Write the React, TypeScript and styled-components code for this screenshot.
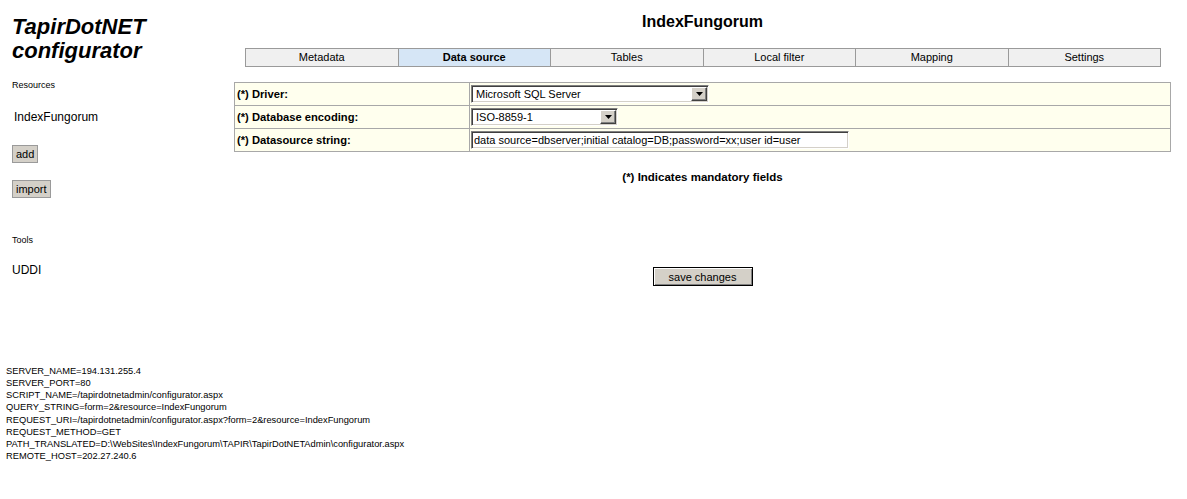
import React from "react";
import styled, { createGlobalStyle } from "styled-components";

const Global = createGlobalStyle`
  html, body { margin: 0; padding: 0; background: #fff; }
  body { font-family: "Liberation Sans", Arial, sans-serif; color: #000; }
`;

const Page = styled.div`
  width: 1187px;
`;

const Top = styled.div`
  display: flex;
  min-height: 365px;
`;

const Sidebar = styled.div`
  width: 222px;
  padding-left: 12px;
  flex-shrink: 0;
  display: flex;
  flex-direction: column;
  align-items: flex-start;
`;

const Title = styled.h1`
  margin: 15px 0 0;
  font: italic bold 22px/24px "Liberation Sans", Arial, sans-serif;
`;

const SectionLabel = styled.div<{ $mt: number }>`
  margin-top: ${(p) => p.$mt}px;
  font-size: 9px;
  line-height: 11px;
`;

const SideLink = styled.div<{ $mt: number; $indent?: number }>`
  margin-top: ${(p) => p.$mt}px;
  margin-left: ${(p) => p.$indent ?? 0}px;
  font-size: 12px;
  line-height: 14px;
`;

const SmallButton = styled.button<{ $mt: number }>`
  margin-top: ${(p) => p.$mt}px;
  height: 18px;
  padding: 0 3px;
  background: #d4d0c8;
  border: 1px solid #9a9a9a;
  font: 11px/14px "Liberation Sans", Arial, sans-serif;
  color: #000;
`;

const Main = styled.div`
  width: 937px;
  display: flex;
  flex-direction: column;
  align-items: center;
`;

const Heading = styled.h2`
  margin: 13px 0 0;
  font: bold 16px/18px "Liberation Sans", Arial, sans-serif;
  text-align: center;
`;

const Tabs = styled.div`
  margin-top: 17px;
  margin-left: 1px;
  width: 915px;
  display: grid;
  grid-template-columns: repeat(6, 1fr);
  border-left: 1px solid #9a9a9a;
  border-top: 1px solid #9a9a9a;
  border-bottom: 1px solid #9a9a9a;
`;

const Tab = styled.div<{ $active?: boolean }>`
  height: 17px;
  border-right: 1px solid #9a9a9a;
  background: ${(p) => (p.$active ? "#d6e6f6" : "#f0f0f0")};
  font-size: 11px;
  line-height: 17px;
  font-weight: ${(p) => (p.$active ? "bold" : "normal")};
  text-align: center;
`;

const FormGrid = styled.div`
  margin-top: 15px;
  width: 937px;
  box-sizing: border-box;
  display: grid;
  grid-template-columns: 235px 1fr;
  border-top: 1px solid #a8a8a8;
  border-left: 1px solid #a8a8a8;
  background: #ffffee;
`;

const LabelCell = styled.div`
  height: 22px;
  border-right: 1px solid #a8a8a8;
  border-bottom: 1px solid #a8a8a8;
  padding-left: 2px;
  display: flex;
  align-items: center;
  font-size: 11.2px;
  font-weight: bold;
`;

const ValueCell = styled.div`
  height: 22px;
  border-right: 1px solid #a8a8a8;
  border-bottom: 1px solid #a8a8a8;
  padding-left: 1px;
  display: flex;
  align-items: center;
`;

const SelectBox = styled.div<{ $w: number }>`
  width: ${(p) => p.$w}px;
  height: 18px;
  box-sizing: border-box;
  display: flex;
  background: #fff;
  border: 1px solid;
  border-color: #808080 #ffffff #ffffff #808080;
  box-shadow: inset 1px 1px 0 #404040, inset -1px -1px 0 #d4d0c8;
  padding: 1px;
`;

const SelectText = styled.span`
  flex: 1;
  padding-left: 3px;
  font-size: 11px;
  line-height: 14px;
  white-space: nowrap;
  overflow: hidden;
`;

const ArrowButton = styled.span`
  width: 16px;
  height: 14px;
  box-sizing: border-box;
  background: #d4d0c8;
  border: 1px solid;
  border-color: #ffffff #404040 #404040 #ffffff;
  box-shadow: inset -1px -1px 0 #808080;
  display: flex;
  align-items: center;
  justify-content: center;
`;

const TextInput = styled.input`
  width: 378px;
  height: 18px;
  box-sizing: border-box;
  margin: 0;
  padding: 0 2px;
  background: #fff;
  border: 1px solid;
  border-color: #808080 #ffffff #ffffff #808080;
  box-shadow: inset 1px 1px 0 #404040, inset -1px -1px 0 #d4d0c8;
  font: 11px "Liberation Sans", Arial, sans-serif;
  color: #000;
  outline: none;
`;

const Note = styled.div`
  margin-top: 19px;
  font: bold 11.5px/13px "Liberation Sans", Arial, sans-serif;
  text-align: center;
`;

const SaveButton = styled.button`
  margin-top: 83px;
  width: 100px;
  height: 19px;
  padding: 0;
  background: #d4d0c8;
  border: 1px solid #000;
  box-shadow: inset 1px 1px 0 #ffffff, inset -1px -1px 0 #808080;
  font: 11px/14px "Liberation Sans", Arial, sans-serif;
  color: #000;
`;

const ServerInfo = styled.div`
  padding-left: 6px;
  font-size: 9.3px;
  line-height: 12.15px;
`;

const Arrow = () => (
  <svg width="7" height="4" viewBox="0 0 7 4">
    <polygon points="0,0 7,0 3.5,4" fill="#000" />
  </svg>
);

const Select = ({ w, value }: { w: number; value: string }) => (
  <SelectBox $w={w}>
    <SelectText>{value}</SelectText>
    <ArrowButton>
      <Arrow />
    </ArrowButton>
  </SelectBox>
);

const tabs = ["Metadata", "Data source", "Tables", "Local filter", "Mapping", "Settings"];

const serverLines = [
  "SERVER_NAME=194.131.255.4",
  "SERVER_PORT=80",
  "SCRIPT_NAME=/tapirdotnetadmin/configurator.aspx",
  "QUERY_STRING=form=2&resource=IndexFungorum",
  "REQUEST_URI=/tapirdotnetadmin/configurator.aspx?form=2&resource=IndexFungorum",
  "REQUEST_METHOD=GET",
  "PATH_TRANSLATED=D:\\WebSites\\IndexFungorum\\TAPIR\\TapirDotNETAdmin\\configurator.aspx",
  "REMOTE_HOST=202.27.240.6",
];

export default function App() {
  return (
    <Page>
      <Global />
      <Top>
        <Sidebar>
          <Title>
            TapirDotNET
            <br />
            configurator
          </Title>
          <SectionLabel $mt={17}>Resources</SectionLabel>
          <SideLink $mt={19} $indent={2}>IndexFungorum</SideLink>
          <SmallButton $mt={21}>add</SmallButton>
          <SmallButton $mt={17}>import</SmallButton>
          <SectionLabel $mt={37}>Tools</SectionLabel>
          <SideLink $mt={17}>UDDI</SideLink>
        </Sidebar>
        <Main>
          <Heading>IndexFungorum</Heading>
          <Tabs>
            {tabs.map((t) => (
              <Tab key={t} $active={t === "Data source"}>
                {t}
              </Tab>
            ))}
          </Tabs>
          <FormGrid>
            <LabelCell>(*) Driver:</LabelCell>
            <ValueCell>
              <Select w={238} value="Microsoft SQL Server" />
            </ValueCell>
            <LabelCell>(*) Database encoding:</LabelCell>
            <ValueCell>
              <Select w={147} value="ISO-8859-1" />
            </ValueCell>
            <LabelCell>(*) Datasource string:</LabelCell>
            <ValueCell>
              <TextInput
                readOnly
                defaultValue="data source=dbserver;initial catalog=DB;password=xx;user id=user"
              />
            </ValueCell>
          </FormGrid>
          <Note>(*) Indicates mandatory fields</Note>
          <SaveButton>save changes</SaveButton>
        </Main>
      </Top>
      <ServerInfo>
        {serverLines.map((l) => (
          <div key={l}>{l}</div>
        ))}
      </ServerInfo>
    </Page>
  );
}
